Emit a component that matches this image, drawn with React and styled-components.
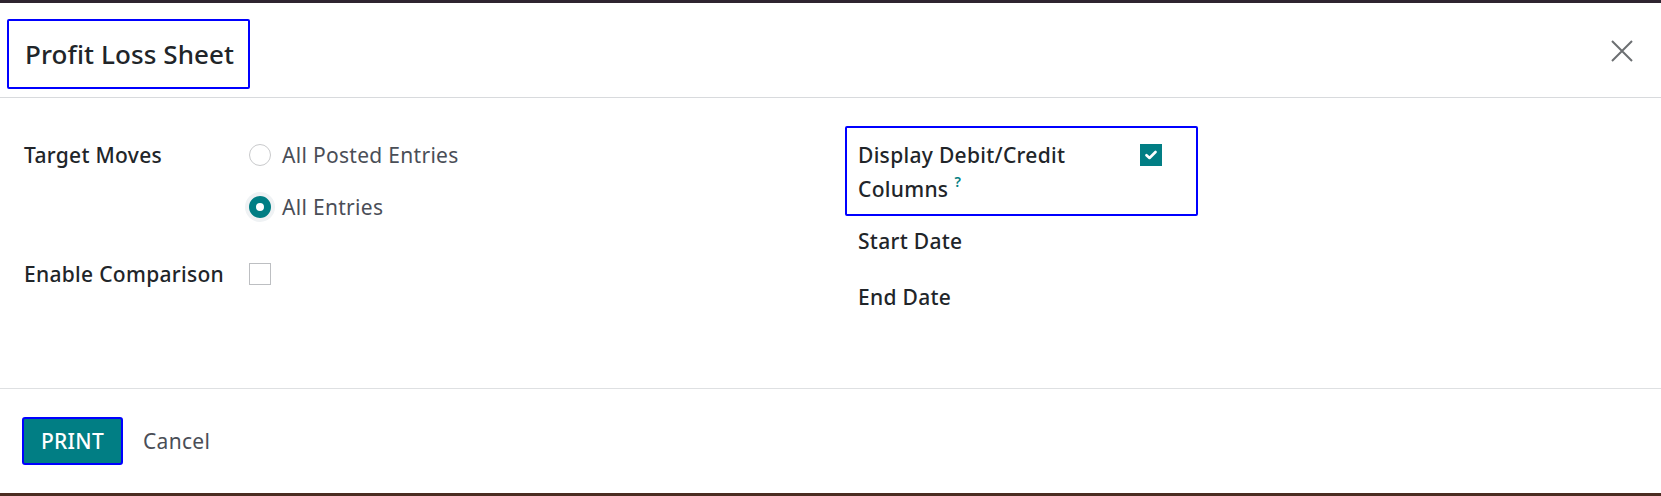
import React from 'react';
import styled, {createGlobalStyle} from 'styled-components';

const GlobalStyle = createGlobalStyle`
  html, body {
    margin: 0;
    padding: 0;
    background: #fff;
  }
  body {
    font-family: "Noto Sans", "Open Sans", sans-serif;
    color: #212529;
  }
`;

const teal = '#017e84';
const focusBlue = '#0000ff';

const Page = styled.div`
  width: 1661px;
  height: 496px;
  display: flex;
  flex-direction: column;
  overflow: hidden;
`;

const TopStrip = styled.div`
  height: 3px;
  flex: none;
  background: #2e2430;
`;

const BottomStrip = styled.div`
  height: 3px;
  flex: none;
  background: #4b2c21;
`;

const Header = styled.header`
  display: flex;
  align-items: flex-start;
  justify-content: space-between;
  padding: 16px 27px 8px 7px;
  border-bottom: 1px solid #d8dadd;
`;

const TitleBox = styled.div`
  border: 2px solid ${focusBlue};
  border-radius: 2px;
  height: 66px;
  padding: 0 14px 0 16px;
  display: flex;
  align-items: center;
`;

const Title = styled.h4`
  margin: 0;
  font-size: 26px;
  font-weight: 500;
  letter-spacing: 0.1px;
  color: #212529;
`;

const CloseButton = styled.button`
  border: 0;
  background: none;
  padding: 0;
  margin-top: 20px;
  width: 24px;
  height: 24px;
  color: #6c6f72;
  cursor: pointer;
`;

const Body = styled.main`
  flex: 1;
  display: grid;
  grid-template-columns: 808px 1fr;
  column-gap: 13px;
  padding: 28px 22px 0 24px;
`;

const Group = styled.div`
  display: flex;
  flex-direction: column;
  padding-top: ${p => p.$offset || 0}px;
`;

const FieldRow = styled.div`
  display: grid;
  grid-template-columns: ${p => p.$labelWidth}px auto;
  align-items: start;
  margin-top: ${p => p.$gap || 0}px;
  padding: ${p => (p.$outlined ? '10px 35px 8px 11px' : '0 0 0 13px')};
  border: ${p => (p.$outlined ? `2px solid ${focusBlue}` : '0')};
  border-radius: 2px;
  width: ${p => (p.$outlined ? '353px' : 'auto')};
  box-sizing: border-box;
`;

const LeftRow = styled(FieldRow)`
  padding: 0;
`;

const Label = styled.label`
  font-size: 21px;
  font-weight: 500;
  line-height: 34px;
  letter-spacing: 0.3px;
  color: #212529;
`;

const Help = styled.span`
  display: inline-block;
  color: ${teal};
  font-size: 14px;
  font-weight: 600;
  line-height: 14px;
  margin-left: 6px;
  vertical-align: top;
  margin-top: 3px;
`;

const RadioList = styled.div`
  display: flex;
  flex-direction: column;
  gap: 18px;
`;

const RadioItem = styled.div`
  display: flex;
  align-items: center;
  gap: 11px;
  height: 34px;
  font-size: 21px;
  letter-spacing: 0.3px;
  color: #4a4e57;
`;

const RadioDot = styled.span`
  width: 22px;
  height: 22px;
  border-radius: 50%;
  box-sizing: border-box;
  flex: none;
  border: ${p => (p.$checked ? `7px solid ${teal}` : '1px solid #c9cacc')};
  background: #fff;
  box-shadow: ${p => (p.$checked ? '0 0 0 4px #eff2f4' : 'none')};
`;

const CheckBox = styled.span`
  width: 22px;
  height: 22px;
  box-sizing: border-box;
  display: flex;
  align-items: center;
  justify-content: center;
  background: ${p => (p.$checked ? teal : '#fff')};
  border: ${p => (p.$checked ? '0' : '1px solid #bdbfc2')};
  margin-top: ${p => p.$top || 0}px;
`;

const Footer = styled.footer`
  display: flex;
  align-items: center;
  gap: 20px;
  height: 105px;
  box-sizing: border-box;
  padding: 0 22px;
  border-top: 1px solid #dee0e2;
`;

const PrintButton = styled.button`
  height: 48px;
  width: 101px;
  border: 2px solid ${focusBlue};
  border-radius: 3px;
  background: ${teal};
  color: #fff;
  font-family: inherit;
  font-size: 21px;
  font-weight: 500;
  letter-spacing: 0.3px;
  cursor: pointer;
`;

const CancelButton = styled.button`
  border: 0;
  background: none;
  font-family: inherit;
  font-size: 21px;
  letter-spacing: 0.3px;
  color: #4a4e57;
  cursor: pointer;
  padding: 0;
`;

const CloseIcon = () => (
  <svg width="24" height="24" viewBox="0 0 24 24" fill="none" stroke="currentColor" strokeWidth="2">
    <path d="M2 2 L22 22 M22 2 L2 22" />
  </svg>
);

const CheckMark = () => (
  <svg width="12" height="10" viewBox="0 0 12 10" fill="none" stroke="#fff" strokeWidth="2.6" strokeLinecap="round" strokeLinejoin="round">
    <path d="M1.5 5.2 L4.5 8 L10.5 2" />
  </svg>
);

export default function App() {
  return (
    <Page>
      <GlobalStyle />
      <TopStrip />
      <Header>
        <TitleBox>
          <Title>Profit Loss Sheet</Title>
        </TitleBox>
        <CloseButton aria-label="Close">
          <CloseIcon />
        </CloseButton>
      </Header>
      <Body>
        <Group $offset={12}>
          <LeftRow $labelWidth={225}>
            <Label>Target Moves</Label>
            <RadioList>
              <RadioItem><RadioDot />All Posted Entries</RadioItem>
              <RadioItem><RadioDot $checked />All Entries</RadioItem>
            </RadioList>
          </LeftRow>
          <LeftRow $labelWidth={225} $gap={33}>
            <Label>Enable Comparison</Label>
            <CheckBox $top={6} />
          </LeftRow>
        </Group>
        <Group>
          <FieldRow $outlined $labelWidth={282}>
            <Label>
              <span>Display Debit/Credit </span>
              <span>Columns</span>
              <Help>?</Help>
            </Label>
            <CheckBox $checked $top={6}><CheckMark /></CheckBox>
          </FieldRow>
          <FieldRow $labelWidth={282} $gap={8}>
            <Label>Start Date</Label>
          </FieldRow>
          <FieldRow $labelWidth={282} $gap={22}>
            <Label>End Date</Label>
          </FieldRow>
        </Group>
      </Body>
      <Footer>
        <PrintButton>PRINT</PrintButton>
        <CancelButton>Cancel</CancelButton>
      </Footer>
      <BottomStrip />
    </Page>
  );
}
